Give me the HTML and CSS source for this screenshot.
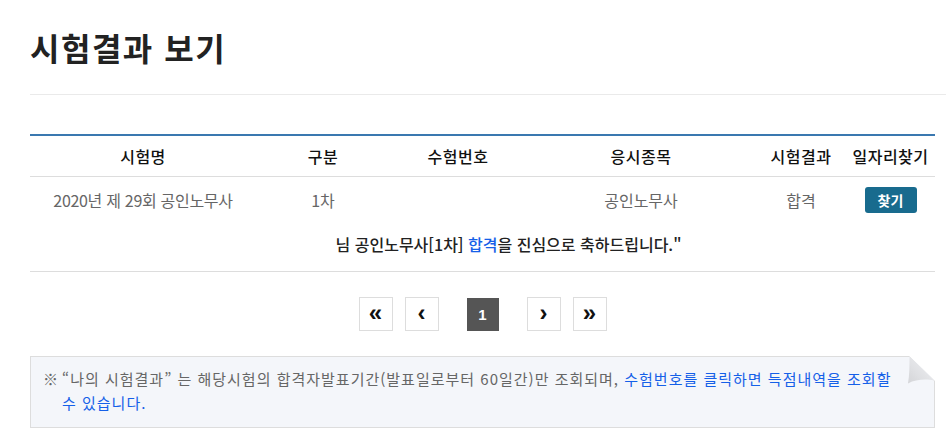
FILE: index.html
```html
<!DOCTYPE html>
<html lang="ko">
<head>
    <meta charset="UTF-8">
    <meta name="viewport" content="width=device-width, initial-scale=1.0">
    <title>시험결과 보기</title>
    <link rel="stylesheet" href="styles.css">
</head>
<body>
    <div class="page">
        <h1 class="page-title">시험결과 보기</h1>
        <hr class="title-line">

        <table class="result-table">
            <thead>
                <tr>
                    <th class="col-name">시험명</th>
                    <th class="col-type">구분</th>
                    <th class="col-no">수험번호</th>
                    <th class="col-subject">응시종목</th>
                    <th class="col-result">시험결과</th>
                    <th class="col-job">일자리찾기</th>
                </tr>
            </thead>
            <tbody>
                <tr class="data-row">
                    <td>2020년 제 29회 공인노무사</td>
                    <td>1차</td>
                    <td></td>
                    <td>공인노무사</td>
                    <td>합격</td>
                    <td><a href="#" class="find-button">찾기</a></td>
                </tr>
                <tr class="message-row">
                    <td colspan="6"><span class="name"></span> 님 공인노무사[1차] <span class="pass">합격</span>을 진심으로 축하드립니다."</td>
                </tr>
            </tbody>
        </table>

        <div class="pagination">
            <a href="#" class="page-box">&laquo;</a>
            <a href="#" class="page-box">&lsaquo;</a>
            <span class="page-current">1</span>
            <a href="#" class="page-box">&rsaquo;</a>
            <a href="#" class="page-box">&raquo;</a>
        </div>

        <div class="notice">
            <span class="mark">※</span>
            <p>“나의 시험결과” 는 해당시험의 합격자발표기간(발표일로부터 60일간)만 조회되며, <span class="link">수험번호를 클릭하면 득점내역을 조회할</span> <span class="link">수 있습니다.</span></p>
            <svg class="fold" width="28" height="29" viewBox="0 0 28 29">
                <defs>
                    <linearGradient id="flap" x1="0" y1="1" x2="1" y2="0">
                        <stop offset="0" stop-color="#d4d5d8"/>
                        <stop offset="0.6" stop-color="#e6e7ea"/>
                        <stop offset="1" stop-color="#f6f6f8"/>
                    </linearGradient>
                </defs>
                <path d="M2 0 H28 V25 Z" fill="#fff"/>
                <path d="M2.5 0.5 L27 24.5 C20 23 9 23 1 27.5 C2.5 19 2.5 9 2.5 0.5 Z" fill="url(#flap)"/>
                <path d="M2.5 0.5 L27 24.5" stroke="#e4e5e8" stroke-width="1" fill="none"/>
            </svg>
        </div>
    </div>
</body>
</html>
```

FILE: styles.css
```css
body {
    margin: 0;
    padding: 0;
    background-color: #fff;
    color: #222;
    font-family: "Noto Sans CJK KR", "Noto Sans", sans-serif;
}

.page {
    padding-left: 30px;
}

.page-title {
    margin: 0;
    padding-top: 25px;
    font-size: 32px;
    line-height: 44px;
    font-weight: bold;
    color: #222;
    letter-spacing: 1.5px;
}

.title-line {
    margin: 25px 0 0 0;
    border: none;
    border-top: 1px solid #eaeaea;
}

.result-table {
    width: 905px;
    margin-top: 39px;
    border-collapse: collapse;
    border-top: 2px solid #3a78b0;
    font-size: 16px;
}

.result-table th {
    height: 40px;
    padding: 0;
    font-weight: 500;
    color: #111;
    border-bottom: 1px solid #ddd;
    text-align: center;
    letter-spacing: 0.5px;
}

.col-name { width: 226px; }
.col-type { width: 134px; }
.col-no { width: 136px; }
.col-subject { width: 230px; }
.col-result { width: 90px; }
.col-job { width: 89px; }

.data-row td {
    height: 46px;
    padding: 0;
    text-align: center;
    color: #666;
}

.data-row td:first-child {
    letter-spacing: -0.3px;
}

.find-button {
    display: inline-block;
    width: 52px;
    height: 26px;
    line-height: 26px;
    background-color: #186b8e;
    color: #fff;
    font-size: 14px;
    font-weight: bold;
    text-decoration: none;
    border-radius: 3px;
}

.message-row td {
    height: 42px;
    padding: 0 0 6px 52px;
    text-align: center;
    font-weight: 500;
    color: #222;
    border-bottom: 1px solid #ddd;
}

.pass {
    color: #1560e8;
}

.pagination {
    width: 905px;
    display: flex;
    justify-content: center;
    align-items: center;
    margin-top: 25px;
}

.page-box {
    width: 32px;
    height: 32px;
    line-height: 30px;
    border: 1px solid #ddd;
    text-align: center;
    text-decoration: none;
    color: #111;
    font-family: "Liberation Sans", sans-serif;
    font-size: 24px;
    font-weight: bold;
    margin: 0 6px;
}

.page-current {
    width: 32px;
    height: 33px;
    line-height: 33px;
    background-color: #555;
    color: #fff;
    text-align: center;
    font-family: "Liberation Sans", sans-serif;
    font-size: 15px;
    font-weight: bold;
    margin: 0 22px;
}

.notice {
    position: relative;
    display: flex;
    width: 879px;
    margin-top: 25px;
    padding: 10px 12px 12px 12px;
    background-color: #f4f6fa;
    border: 1px solid #ddd;
    font-size: 15px;
    line-height: 24px;
    color: #666;
}

.mark {
    flex: 0 0 19px;
}

.notice p {
    margin: 0;
    letter-spacing: 1px;
    padding-right: 30px;
}

.notice .link {
    color: #1560e8;
}

.fold {
    position: absolute;
    top: -1px;
    right: -1px;
}
```
